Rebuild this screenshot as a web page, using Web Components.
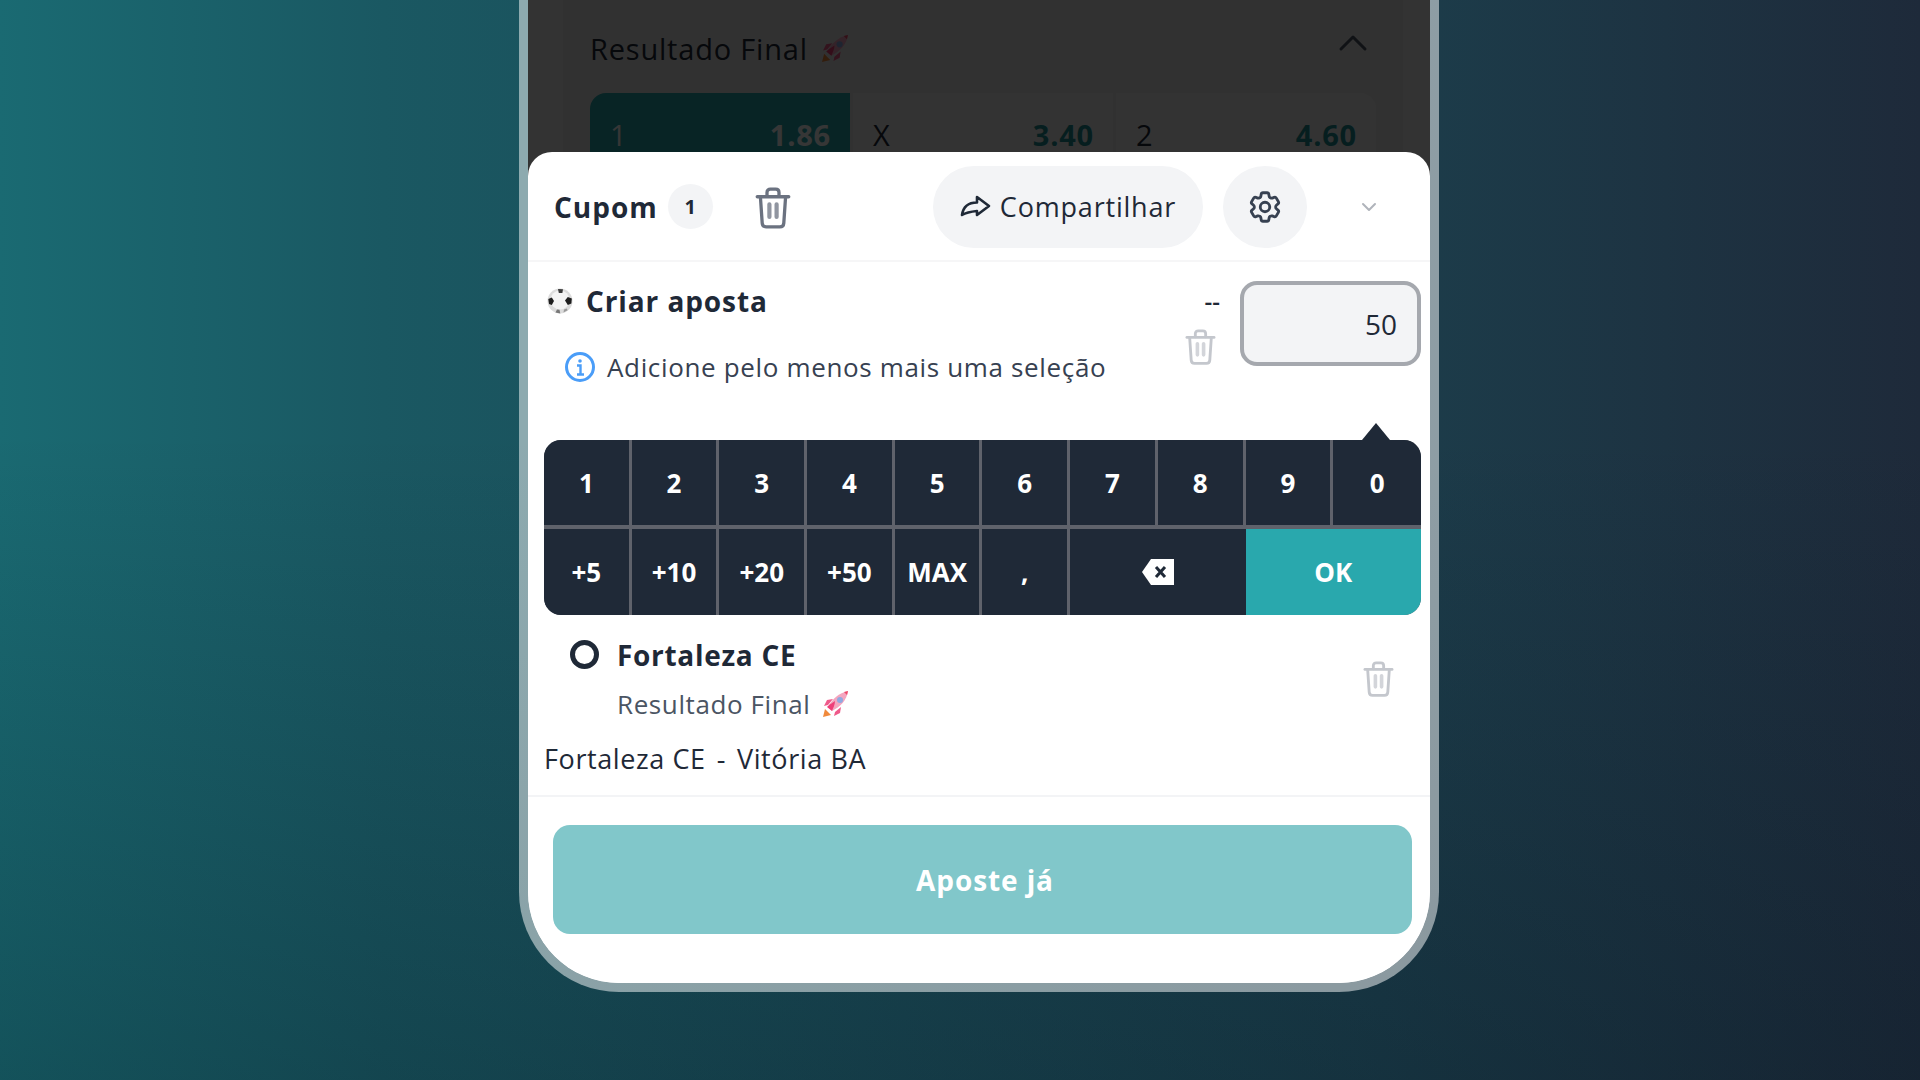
<!DOCTYPE html>
<html lang="pt-BR">
<head>
<meta charset="utf-8">
<title>Cupom</title>
<style>
  html, body { margin: 0; height: 100%; }
  body {
    width: 1920px;
    height: 1080px;
    overflow: hidden;
    background:
      linear-gradient(180deg, rgba(0,0,0,0) 40%, rgba(3,20,30,.28) 100%),
      linear-gradient(90deg, #1a6a72 0%, #1a5862 20%, #1c3d4b 72%, #1e2a3a 100%);
    font-family: "Open Sans", "Noto Sans", sans-serif;
    color: #1f2937;
  }
</style>
</head>
<body>

<phone-frame>
  <market-card slot="behind"></market-card>
  <coupon-header></coupon-header>
  <bet-row></bet-row>
  <num-keypad></num-keypad>
  <selection-item></selection-item>
  <submit-bar></submit-bar>
</phone-frame>

<script>
const TRASH = `<svg viewBox="0 0 24 28" fill="none" stroke="currentColor" stroke-width="2.2" stroke-linecap="round" stroke-linejoin="round">
  <path d="M1.5 6.5h21"/>
  <path d="M8 6V3.6C8 2.2 9 1.4 10.2 1.4h3.6C15 1.4 16 2.2 16 3.6V6"/>
  <path d="M3.6 6.5l1.2 17.6c.1 1.5 1.1 2.5 2.6 2.5h9.2c1.5 0 2.5-1 2.6-2.5l1.2-17.6"/>
  <path d="M9.6 11.5v8.5M14.4 11.5v8.5" stroke-width="2.8" opacity=".75"/>
</svg>`;

const ROCKET = `<svg viewBox="0 0 28 28">
  <path d="M1 27l2-8 6 6z" fill="#f08a3c"/>
  <path d="M6 15l-4 1 3-6 6-1z" fill="#ef5a8a"/>
  <path d="M13 22l-1 4 6-3 1-6z" fill="#ef5a8a"/>
  <path d="M6 17C10 9 17 3 26 1c-1 9-8 16-16 20z" fill="#f4a6bf"/>
  <path d="M5 17c3-3 4-3 8-6 0 4-2 7-3 10z" fill="#ee3f78"/>
  <circle cx="18" cy="10" r="3" fill="#8fa9e0"/>
  <path d="M22 2l4-1-1 4z" fill="#ef4a6a"/>
</svg>`;

class PhoneFrame extends HTMLElement {
  constructor() {
    super();
    this.attachShadow({ mode: 'open' });
    this.shadowRoot.innerHTML = `
      <style>
        :host {
          display: block;
          box-sizing: border-box;
          width: 920px;
          height: 992px;
          margin-left: 519px;
          border: 9px solid rgba(255,255,255,.5);
          border-top: 0;
          border-radius: 0 0 100px 100px;
          overflow: hidden;
          background: #fff;
          background-clip: padding-box;
        }
        .shell { display: flex; flex-direction: column; height: 100%; }
        .behind {
          height: 176px;
          margin-bottom: -24px;
          flex: none;
          position: relative;
          overflow: hidden;
          background: #f1f1f1;
        }
        .behind::after {
          content: "";
          position: absolute;
          inset: 0;
          background: rgba(0,0,0,.79);
        }
        .sheet {
          flex: 1;
          position: relative;
          display: flex;
          flex-direction: column;
          background: #fff;
          border-radius: 24px 24px 0 0;
        }
      </style>
      <div class="shell">
        <div class="behind"><slot name="behind"></slot></div>
        <div class="sheet"><slot></slot></div>
      </div>`;
  }
}

class MarketCard extends HTMLElement {
  constructor() {
    super();
    this.attachShadow({ mode: 'open' });
    this.shadowRoot.innerHTML = `
      <style>
        :host {
          display: block;
          box-sizing: border-box;
          margin: -24px 27px 0 35px;
          height: 240px;
          padding: 52px 27px 0 27px;
          background: #e8e8e8;
          border-radius: 24px;
          font-size: 29px;
          letter-spacing: .8px;
        }
        .title { display: flex; align-items: center; height: 40px; gap: 13px; }
        .title svg.r { width: 29px; height: 29px; }
        .title svg.c { width: 30px; height: 18px; margin-left: auto; margin-right: 8px; margin-top: -10px; }
        .odds {
          display: grid;
          grid-template-columns: repeat(3, 1fr);
          gap: 3px;
          margin-top: 25px;
        }
        .odd {
          height: 96px;
          box-sizing: border-box;
          padding: 22px 19px 0 20px;
          display: flex;
          justify-content: space-between;
          background: #f1f1f1;
          color: #1f2937;
        }
        .odd:first-child { border-radius: 16px 0 0 0; }
        .odd:last-child { border-radius: 0 16px 0 0; }
        .odd b { color: #1f8f94; font-weight: 700; }
        .odd.sel { background: #29a8ad; color: #fff; }
        .odd.sel b { color: #fff; }
      </style>
      <div class="title">
        <span>Resultado Final</span>
        ${ROCKET.replace('<svg ', '<svg class="r" ')}
        <svg class="c" viewBox="0 0 30 18" fill="none" stroke="#4b5563" stroke-width="3" stroke-linecap="round" stroke-linejoin="round"><path d="M3 15L15 3l12 12"/></svg>
      </div>
      <div class="odds">
        <div class="odd sel"><span>1</span><b>1.86</b></div>
        <div class="odd"><span>X</span><b>3.40</b></div>
        <div class="odd"><span>2</span><b>4.60</b></div>
      </div>`;
  }
}

class CouponHeader extends HTMLElement {
  constructor() {
    super();
    this.attachShadow({ mode: 'open' });
    this.shadowRoot.innerHTML = `
      <style>
        :host {
          display: flex;
          align-items: center;
          box-sizing: border-box;
          height: 110px;
          padding: 1px 26px 0 26px;
          border-bottom: 2px solid #f6f6f7;
          font-size: 27px;
          letter-spacing: .8px;
          color: #1f2937;
        }
        .name { font-size: 28px; font-weight: 700; letter-spacing: 1px; }
        .count {
          width: 45px; height: 45px;
          margin-left: 10px;
          border-radius: 50%;
          background: #f3f4f6;
          display: flex; align-items: center; justify-content: center;
          font-size: 20px; font-weight: 700;
          letter-spacing: 0;
        }
        .trash { width: 36px; height: 40px; margin-left: 42px; color: #6b7280; }
        .share {
          margin-left: auto;
          height: 82px;
          width: 270px;
          border-radius: 41px;
          background: #f3f4f6;
          display: flex; align-items: center; justify-content: center;
          gap: 9px;
        }
        .share svg { width: 31px; height: 25px; }
        .gear {
          width: 84px; height: 82px;
          margin-left: 20px;
          border-radius: 50%;
          background: #f3f4f6;
          display: flex; align-items: center; justify-content: center;
        }
        .gear svg { width: 38px; height: 38px; }
        .chev { width: 16px; height: 10px; margin: 0 27px 0 54px; }
      </style>
      <span class="name">Cupom</span>
      <span class="count">1</span>
      <span class="trash">${TRASH}</span>
      <div class="share">
        <svg viewBox="0 0 31 25" fill="none" stroke="#1f2937" stroke-width="2.6" stroke-linejoin="round"><path d="M2 21C3 14 7 8.500 17 8.500V3L29 12 17 21V17C12 17.500 7 18 2 21z"/></svg>
        <span>Compartilhar</span>
      </div>
      <div class="gear">
        <svg viewBox="0 0 24 24" fill="none" stroke="#374151" stroke-width="1.8">
          <path d="M9.594 3.94c.09-.542.56-.94 1.11-.94h2.593c.55 0 1.02.398 1.11.94l.213 1.281c.063.374.313.686.645.87.074.04.147.083.22.127.325.196.72.257 1.075.124l1.217-.456a1.125 1.125 0 0 1 1.37.49l1.296 2.247a1.125 1.125 0 0 1-.26 1.431l-1.003.827c-.293.241-.438.613-.43.992a7.723 7.723 0 0 1 0 .255c-.008.378.137.75.43.991l1.004.827c.424.35.534.955.26 1.43l-1.298 2.247a1.125 1.125 0 0 1-1.369.491l-1.217-.456c-.355-.133-.75-.072-1.076.124a6.47 6.47 0 0 1-.22.128c-.331.183-.581.495-.644.869l-.213 1.281c-.09.543-.56.94-1.11.94h-2.594c-.55 0-1.019-.398-1.11-.94l-.213-1.281c-.062-.374-.312-.686-.644-.87a6.52 6.52 0 0 1-.22-.127c-.325-.196-.72-.257-1.076-.124l-1.217.456a1.125 1.125 0 0 1-1.369-.49l-1.297-2.247a1.125 1.125 0 0 1 .26-1.431l1.004-.827c.292-.24.437-.613.43-.991a6.932 6.932 0 0 1 0-.255c.007-.38-.138-.751-.43-.992l-1.004-.827a1.125 1.125 0 0 1-.26-1.43l1.297-2.247a1.125 1.125 0 0 1 1.37-.491l1.216.456c.356.133.751.072 1.076-.124.072-.044.146-.086.22-.128.332-.183.582-.495.644-.869l.214-1.28Z"/>
          <circle cx="12" cy="12" r="3"/>
        </svg>
      </div>
      <svg class="chev" viewBox="0 0 16 10" fill="none" stroke="#b0b4bb" stroke-width="2" stroke-linecap="round" stroke-linejoin="round"><path d="M2 2l6 6 6-6"/></svg>`;
  }
}

class BetRow extends HTMLElement {
  constructor() {
    super();
    this.attachShadow({ mode: 'open' });
    this.shadowRoot.innerHTML = `
      <style>
        :host {
          display: flex;
          box-sizing: border-box;
          height: 178px;
          padding: 19px 9px 0 19px;
          color: #1f2937;
        }
        .left { flex: 1; }
        .title { display: flex; align-items: center; gap: 13px; height: 40px; font-size: 28px; font-weight: 700; letter-spacing: .9px; }
        .title svg { width: 26px; height: 26px; }
        .info { display: flex; align-items: center; gap: 11px; margin: 29px 0 0 17px; font-size: 26px; letter-spacing: .65px; color: #374151; height: 34px; }
        .info svg { width: 32px; height: 32px; }
        .mid { display: flex; flex-direction: column; align-items: flex-end; width: 100px; margin-right: 20px; }
        .dash { font-size: 24px; line-height: 40px; height: 40px; font-weight: 600; }
        .mid .trash { width: 31px; height: 36px; margin: 8px 4px 0 0; color: #c4c7cd; }
        .amount {
          box-sizing: border-box;
          width: 181px; height: 85px;
          border: 4px solid #a5a8ae;
          border-radius: 17px;
          background: #f3f4f6;
          display: flex; align-items: center; justify-content: flex-end;
          padding-right: 20px;
          font-size: 28px;
        }
      </style>
      <div class="left">
        <div class="title">
          <svg viewBox="0 0 26 26">
            <circle cx="13" cy="13" r="12.500" fill="#dcdcdc"/>
            <circle cx="13" cy="12" r="9.500" fill="#f4f4f4"/>
            <path d="M11 1l5 .3-.6 3.700-3.600 0z" fill="#3a3a3a"/>
            <path d="M1.300 11l3.500-1.500 2.200 3.500-2.200 4-2.800-1z" fill="#1e1e1e"/>
            <path d="M24.800 10.500l-4-1.500-2.800 3.500 2.800 4.500 3.600-1.500z" fill="#1e1e1e"/>
            <path d="M8.500 24.500l1.500-3 2.500.2.800 3.800z" fill="#777"/>
            <path d="M16.500 24.500l.5-3 2.800-1 .8 1.800z" fill="#999"/>
          </svg>
          <span>Criar aposta</span>
        </div>
        <div class="info">
          <svg viewBox="0 0 32 32" fill="none">
            <circle cx="16" cy="16" r="13.500" stroke="#4a9df8" stroke-width="3"/>
            <circle cx="16" cy="10" r="1.800" fill="#4a9df8"/>
            <path d="M13 14.500h3.500V23M13 23.500h7" stroke="#4a9df8" stroke-width="2.400"/>
          </svg>
          <span>Adicione pelo menos mais uma seleção</span>
        </div>
      </div>
      <div class="mid">
        <span class="dash">--</span>
        <span class="trash">${TRASH}</span>
      </div>
      <div class="amount">50</div>`;
  }
}

class NumKeypad extends HTMLElement {
  constructor() {
    super();
    this.attachShadow({ mode: 'open' });
    const digits = ['1','2','3','4','5','6','7','8','9','0'];
    const extras = ['+5','+10','+20','+50','MAX',','];
    const cell = t => `<div class="key">${t}</div>`;
    this.shadowRoot.innerHTML = `
      <style>
        :host {
          display: block;
          position: relative;
          margin: 0 9px 0 16px;
        }
        .caret {
          position: absolute;
          top: -17px;
          right: 31px;
          width: 0; height: 0;
          border: 14px solid transparent;
          border-top: 0;
          border-bottom: 17px solid #1f2937;
        }
        .grid {
          display: grid;
          grid-template-columns: repeat(9, 84.7px) 1fr;
          grid-template-rows: 85px 86px;
          column-gap: 3px;
          row-gap: 4px;
          background: #5f626b;
          border-radius: 17px;
          overflow: hidden;
        }
        .key {
          display: flex; align-items: center; justify-content: center;
          background: #1f2937;
          color: #fff;
          font-size: 26px;
          font-weight: 700;
        }
        .wide { grid-column: span 2; }
        .back { margin-right: -3px; }
        .ok { background: #29a8ad; }
        svg { width: 32px; height: 26px; }
      </style>
      <div class="caret"></div>
      <div class="grid">
        ${digits.map(cell).join('')}
        ${extras.map(cell).join('')}
        <div class="key wide back">
          <svg viewBox="0 0 32 26"><path d="M9 0h23v26H9L0 13z" fill="#fff"/><path d="M14 8l9 10M23 8l-9 10" stroke="#1f2937" stroke-width="3"/></svg>
        </div>
        <div class="key wide ok">OK</div>
      </div>`;
  }
}

class SelectionItem extends HTMLElement {
  constructor() {
    super();
    this.attachShadow({ mode: 'open' });
    this.shadowRoot.innerHTML = `
      <style>
        :host {
          display: flex;
          flex-direction: column;
          box-sizing: border-box;
          height: 182px;
          padding: 18px 0 0 16px;
          border-bottom: 2px solid #f3f4f6;
          color: #1f2937;
        }
        .top { display: flex; padding-left: 26px; }
        .dot {
          box-sizing: border-box;
          width: 29px; height: 29px;
          margin-top: 7px;
          border: 5px solid #1f2937;
          border-radius: 50%;
        }
        .txt { margin-left: 18px; flex: 1; }
        .team { font-size: 28px; font-weight: 700; letter-spacing: .7px; line-height: 44px; }
        .market { display: flex; align-items: center; gap: 11px; font-size: 26px; letter-spacing: .6px; color: #4b5563; line-height: 40px; margin-top: 7px; }
        .market svg { width: 28px; height: 28px; }
        .trash { width: 31px; height: 36px; margin: 28px 36px 0 0; color: #c4c7cd; }
        .match { display: flex; gap: 11px; font-size: 27px; letter-spacing: .6px; line-height: 40px; margin-top: 15px; }
      </style>
      <div class="top">
        <span class="dot"></span>
        <div class="txt">
          <div class="team">Fortaleza CE</div>
          <div class="market"><span>Resultado Final</span>${ROCKET}</div>
        </div>
        <span class="trash">${TRASH}</span>
      </div>
      <div class="match"><span>Fortaleza CE</span><span>-</span><span>Vitória BA</span></div>`;
  }
}

class SubmitBar extends HTMLElement {
  constructor() {
    super();
    this.attachShadow({ mode: 'open' });
    this.shadowRoot.innerHTML = `
      <style>
        :host { display: block; padding: 28px 18px 0 25px; }
        .btn {
          height: 109px;
          border-radius: 17px;
          background: #81c7ca;
          color: #fff;
          font-size: 28px;
          letter-spacing: .9px;
          font-weight: 700;
          display: flex; align-items: center; justify-content: center;
          padding-left: 5px;
        }
      </style>
      <div class="btn">Aposte já</div>`;
  }
}

customElements.define('phone-frame', PhoneFrame);
customElements.define('market-card', MarketCard);
customElements.define('coupon-header', CouponHeader);
customElements.define('bet-row', BetRow);
customElements.define('num-keypad', NumKeypad);
customElements.define('selection-item', SelectionItem);
customElements.define('submit-bar', SubmitBar);
</script>
</body>
</html>
